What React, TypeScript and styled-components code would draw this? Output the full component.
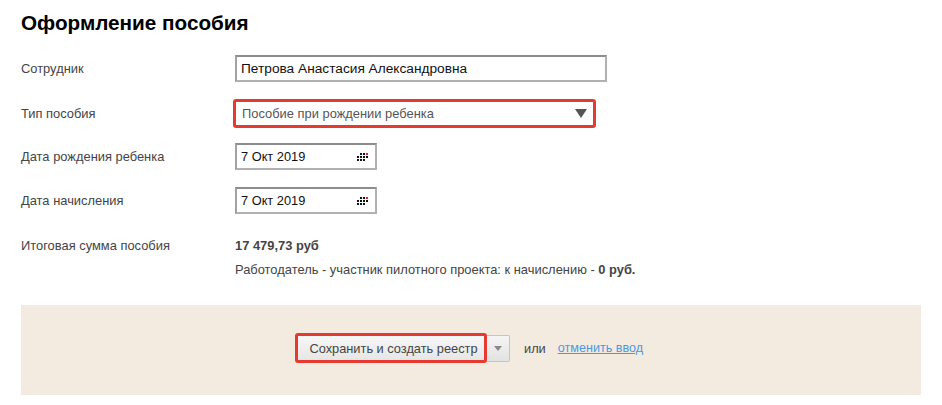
import React from 'react'
import styled, { createGlobalStyle } from 'styled-components'

const GlobalStyle = createGlobalStyle`
  html, body {
    margin: 0;
    padding: 0;
    background: #fff;
    font-family: "Liberation Sans", Arial, sans-serif;
  }
`

const Page = styled.div`
  width: 942px;
  height: 405px;
  padding: 11px 21px 0;
  box-sizing: border-box;
  overflow: hidden;
`

const Title = styled.h1`
  margin: 0 0 21px;
  height: 23px;
  font-size: 20.7px;
  line-height: 23px;
  font-weight: bold;
  color: #000;
`

const Row = styled.div<{ $height: number; $gap: number }>`
  display: grid;
  grid-template-columns: 214px 1fr;
  align-items: center;
  height: ${(p) => p.$height}px;
  margin-bottom: ${(p) => p.$gap}px;
`

const Label = styled.div`
  font-size: 12.9px;
  color: #444;
`

const Input = styled.div<{ $width: number; $size: number }>`
  display: flex;
  align-items: center;
  justify-content: space-between;
  box-sizing: border-box;
  width: ${(p) => p.$width}px;
  height: 27px;
  padding: 0 7px 0 4px;
  border: 2px solid #b0b0b0;
  border-top-color: #8c8c8c;
  border-left-color: #a2a2a2;
  font-size: ${(p) => p.$size}px;
  color: #111;
  background: #fff;
`

const Highlight = styled.div<{ $width: number; $height: number }>`
  display: flex;
  align-items: center;
  justify-content: space-between;
  box-sizing: border-box;
  width: ${(p) => p.$width}px;
  height: ${(p) => p.$height}px;
  border: 3px solid #e53a30;
  border-radius: 3px;
`

const SelectBox = styled(Highlight)`
  margin-left: -2px;
  padding: 0 6px 0 6px;
  font-size: 12.9px;
  color: #555;
`

const Arrow = styled.span<{ $w: number; $h: number; $color: string }>`
  width: 0;
  height: 0;
  border-left: ${(p) => p.$w}px solid transparent;
  border-right: ${(p) => p.$w}px solid transparent;
  border-top: ${(p) => p.$h}px solid ${(p) => p.$color};
`

const Total = styled.div`
  font-size: 12.9px;
  font-weight: bold;
  color: #444;
`

const Note = styled.div`
  margin: 10px 0 0 214px;
  height: 15px;
  font-size: 12.9px;
  line-height: 15px;
  color: #444;

  b {
    font-weight: bold;
  }
`

const Footer = styled.div`
  display: flex;
  align-items: center;
  box-sizing: border-box;
  width: 900px;
  height: 90px;
  margin-top: 28px;
  padding: 0 0 4px 274px;
  background: #f3ebdf;
  font-size: 12.8px;
  color: #444;
`

const SaveButton = styled(Highlight)`
  justify-content: center;
  padding-left: 5px;
  background: linear-gradient(#f7f7f7, #e6e6e6);
  color: #444;
  font-size: 12.8px;
  white-space: nowrap;
  position: relative;
  z-index: 1;
`

const ArrowButton = styled.div`
  display: flex;
  align-items: center;
  justify-content: center;
  box-sizing: border-box;
  width: 24px;
  height: 27px;
  margin-left: -1px;
  border: 1px solid #c4c4c4;
  border-left: none;
  border-radius: 0 2px 2px 0;
  background: linear-gradient(#f5f5f5, #e2e2e2);
`

const Or = styled.span`
  margin-left: 14px;
`

const CancelLink = styled.a`
  margin-left: 12px;
  font-size: 12.6px;
  color: #4a9ae0;
  text-decoration: underline;
`

// Точки календаря: верхний ряд сдвинут вправо, нижний влево
const dots = [
  [3, 0], [6, 0], [9, 0],
  [0, 3], [3, 3], [6, 3], [9, 3],
  [0, 6], [3, 6], [6, 6],
]

const CalendarIcon = () => (
  <svg width="11" height="8" viewBox="0 0 11 8" shapeRendering="crispEdges">
    {dots.map(([x, y]) => (
      <rect
        key={`${x}-${y}`}
        x={x}
        y={y}
        width="2"
        height="2"
        fill={x === 9 && y === 0 ? '#e0202c' : '#111'}
      />
    ))}
  </svg>
)

const DateField = ({ value }: { value: string }) => (
  <Input $width={142} $size={12.8}>
    {value}
    <CalendarIcon />
  </Input>
)

export default function App() {
  return (
    <Page>
      <GlobalStyle />
      <Title>Оформление пособия</Title>
      <Row $height={27} $gap={17}>
        <Label>Сотрудник</Label>
        <Input $width={372} $size={13.7}>Петрова Анастасия Александровна</Input>
      </Row>
      <Row $height={29} $gap={15}>
        <Label>Тип пособия</Label>
        <SelectBox $width={363} $height={29}>
          Пособие при рождении ребенка
          <Arrow $w={6} $h={9} $color="#555" />
        </SelectBox>
      </Row>
      <Row $height={27} $gap={17}>
        <Label>Дата рождения ребенка</Label>
        <DateField value="7 Окт 2019" />
      </Row>
      <Row $height={27} $gap={24}>
        <Label>Дата начисления</Label>
        <DateField value="7 Окт 2019" />
      </Row>
      <Row $height={14} $gap={0}>
        <Label>Итоговая сумма пособия</Label>
        <Total>17 479,73 руб</Total>
      </Row>
      <Note>
        Работодатель - участник пилотного проекта: к начислению - <b>0 руб.</b>
      </Note>
      <Footer>
        <SaveButton $width={192} $height={30}>Сохранить и создать реестр</SaveButton>
        <ArrowButton>
          <Arrow $w={4} $h={5} $color="#888" />
        </ArrowButton>
        <Or>или</Or>
        <CancelLink>отменить ввод</CancelLink>
      </Footer>
    </Page>
  )
}
